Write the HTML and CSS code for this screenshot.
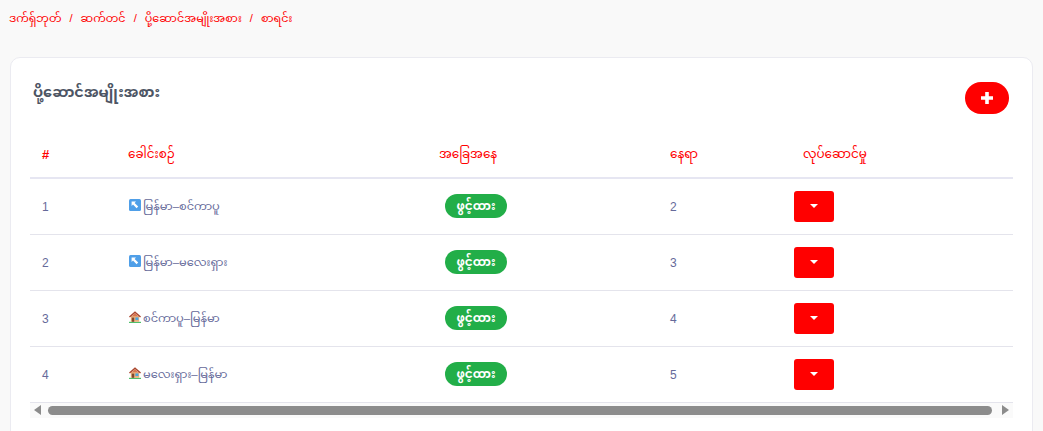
FILE: index.html
```html
<!DOCTYPE html>
<html lang="my">
<head>
    <meta charset="UTF-8">
    <meta name="viewport" content="width=device-width, initial-scale=1.0">
    <title>ပို့ဆောင်အမျိုးအစား</title>
    <link rel="stylesheet" href="styles.css">
</head>
<body>
    <nav class="breadcrumb">
        <a href="#">ဒက်ရှ်ဘုတ်</a>
        <span class="sep">/</span>
        <a href="#">ဆက်တင်</a>
        <span class="sep">/</span>
        <a href="#">ပို့ဆောင်အမျိုးအစား</a>
        <span class="sep">/</span>
        <a href="#">စာရင်း</a>
    </nav>

    <div class="card">
        <div class="card-head">
            <h1>ပို့ဆောင်အမျိုးအစား</h1>
            <button class="add-btn" type="button" aria-label="add">
                <svg width="12" height="12" viewBox="0 0 12 12"><path d="M4.2 0h3.6v4.2H12v3.6H7.8V12H4.2V7.8H0V4.2h4.2z" fill="#fff"/></svg>
            </button>
        </div>

        <div class="table-wrap">
            <table>
                <thead>
                    <tr>
                        <th class="col-num">#</th>
                        <th class="col-name">ခေါင်းစဉ်</th>
                        <th class="col-status">အခြေအနေ</th>
                        <th class="col-place">နေရာ</th>
                        <th class="col-action">လုပ်ဆောင်မှု</th>
                    </tr>
                </thead>
                <tbody>
                    <tr>
                        <td class="cell-text">1</td>
                        <td class="cell-text cell-name">
                            <svg class="emoji" viewBox="0 0 12 12"><rect width="12" height="12" rx="1.5" fill="#4f9fe8"/><path d="M2.6 2.6h4.4L5.6 4l3.6 3.6-1.6 1.6L4 5.6 2.6 7z" fill="#fff"/></svg>မြန်မာ–စင်ကာပူ
                        </td>
                        <td><span class="badge">ဖွင့်ထား</span></td>
                        <td class="cell-text">2</td>
                        <td><button class="menu-btn" type="button" aria-label="menu"><span class="caret"></span></button></td>
                    </tr>
                    <tr>
                        <td class="cell-text">2</td>
                        <td class="cell-text cell-name">
                            <svg class="emoji" viewBox="0 0 12 12"><rect width="12" height="12" rx="1.5" fill="#4f9fe8"/><path d="M2.6 2.6h4.4L5.6 4l3.6 3.6-1.6 1.6L4 5.6 2.6 7z" fill="#fff"/></svg>မြန်မာ–မလေးရှား
                        </td>
                        <td><span class="badge">ဖွင့်ထား</span></td>
                        <td class="cell-text">3</td>
                        <td><button class="menu-btn" type="button" aria-label="menu"><span class="caret"></span></button></td>
                    </tr>
                    <tr>
                        <td class="cell-text">3</td>
                        <td class="cell-text cell-name">
                            <svg class="emoji" viewBox="0 0 12 12"><path d="M0 10.8h12V12H0z" fill="#4fc06a"/><path d="M1.8 5h8.4v5.8H1.8z" fill="#e9b07c"/><path d="M6 .2 12 5.6l-.9 1L6 2.2.9 6.6 0 5.6z" fill="#a9472f"/><path d="M6 2.2 2.6 5.2h6.8z" fill="#d9764f"/><path d="M2.8 6.6h2.4v4.2H2.8z" fill="#80492f"/><path d="M6.4 6.4h3v2.6h-3z" fill="#4aa6e0"/></svg>စင်ကာပူ–မြန်မာ
                        </td>
                        <td><span class="badge">ဖွင့်ထား</span></td>
                        <td class="cell-text">4</td>
                        <td><button class="menu-btn" type="button" aria-label="menu"><span class="caret"></span></button></td>
                    </tr>
                    <tr>
                        <td class="cell-text">4</td>
                        <td class="cell-text cell-name">
                            <svg class="emoji" viewBox="0 0 12 12"><path d="M0 10.8h12V12H0z" fill="#4fc06a"/><path d="M1.8 5h8.4v5.8H1.8z" fill="#e9b07c"/><path d="M6 .2 12 5.6l-.9 1L6 2.2.9 6.6 0 5.6z" fill="#a9472f"/><path d="M6 2.2 2.6 5.2h6.8z" fill="#d9764f"/><path d="M2.8 6.6h2.4v4.2H2.8z" fill="#80492f"/><path d="M6.4 6.4h3v2.6h-3z" fill="#4aa6e0"/></svg>မလေးရှား–မြန်မာ
                        </td>
                        <td><span class="badge">ဖွင့်ထား</span></td>
                        <td class="cell-text">5</td>
                        <td><button class="menu-btn" type="button" aria-label="menu"><span class="caret"></span></button></td>
                    </tr>
                </tbody>
            </table>

            <div class="scrollbar">
                <span class="arrow arrow-left"></span>
                <span class="thumb"></span>
                <span class="arrow arrow-right"></span>
            </div>
        </div>
    </div>
</body>
</html>
```

FILE: styles.css
```css
html, body {
    height: 100%;
    overflow: hidden;
}

body {
    margin: 0;
    background: #f9f9f9;
    font-family: "Liberation Sans", "Noto Sans Myanmar", "Padauk", "Noto Sans", sans-serif;
    font-size: 12px;
    color: #666a9a;
    box-sizing: border-box;
    padding: 9px 10px 0 10px;
}

.breadcrumb {
    display: flex;
    align-items: center;
    gap: 8px;
    height: 18px;
    margin-left: -1px;
    font-size: 11.2px;
    line-height: 18px;
    color: #ff0000;
}

.breadcrumb a {
    color: #ff0000;
    text-decoration: none;
}

.card {
    margin-top: 30px;
    height: 400px;
    background: #fff;
    border: 1px solid #ebebf1;
    border-radius: 10px;
    padding: 23px 19px 0 19px;
    box-sizing: border-box;
    overflow: hidden;
}

.card-head {
    display: flex;
    justify-content: space-between;
    padding: 0 4px 0 3px;
    height: 51px;
}

h1 {
    margin: 0;
    font-size: 14.5px;
    line-height: 22px;
    font-weight: bold;
    color: #4d5564;
}

.add-btn {
    width: 44px;
    height: 32px;
    margin-top: 1px;
    padding: 0;
    border: none;
    border-radius: 16px;
    background: #ff0000;
    display: flex;
    align-items: center;
    justify-content: center;
}

table {
    width: 100%;
    border-collapse: collapse;
    table-layout: fixed;
}

th {
    height: 46px;
    padding: 0 12px;
    box-sizing: border-box;
    text-align: left;
    font-weight: normal;
    color: #ff0000;
    border-bottom: 2px solid #e6e6f2;
}

td {
    height: 56px;
    padding: 0 12px;
    box-sizing: border-box;
    border-bottom: 1px solid #e4e4ec;
}

.cell-text { padding-top: 2px; }
.cell-name { font-size: 11.4px; }

.col-num { width: 86px; font-size: 13px; font-weight: bold; }
.col-name { width: 311px; }
.col-status { width: 231px; }
.col-place { width: 124px; }
.col-action { padding-left: 21px; }

.emoji {
    width: 12px;
    height: 12px;
    margin: 0 2px 0 1px;
    vertical-align: -1px;
}

.badge {
    display: inline-block;
    margin-left: 6px;
    width: 62px;
    height: 24px;
    line-height: 24px;
    border-radius: 12px;
    background: #22ae48;
    color: #fff;
    font-size: 12px;
    font-weight: bold;
    text-align: center;
}

.menu-btn {
    width: 40px;
    height: 31px;
    padding: 0;
    border: none;
    border-radius: 3px;
    background: #ff0000;
    display: flex;
    align-items: center;
    justify-content: center;
}

.caret {
    width: 0;
    height: 0;
    border-left: 4px solid transparent;
    border-right: 4px solid transparent;
    border-top: 4px solid #fff;
}

.scrollbar {
    display: flex;
    align-items: center;
    height: 15px;
    background: #fafafa;
    padding: 0 4px;
}

.thumb {
    flex: 1;
    height: 9px;
    margin: 0 10px 0 7px;
    border-radius: 5px;
    background: #8c8c8c;
}

.arrow {
    width: 0;
    height: 0;
    border-top: 5px solid transparent;
    border-bottom: 5px solid transparent;
}

.arrow-left { border-right: 7px solid #8c8c8c; }
.arrow-right { border-left: 7px solid #8c8c8c; }
```
